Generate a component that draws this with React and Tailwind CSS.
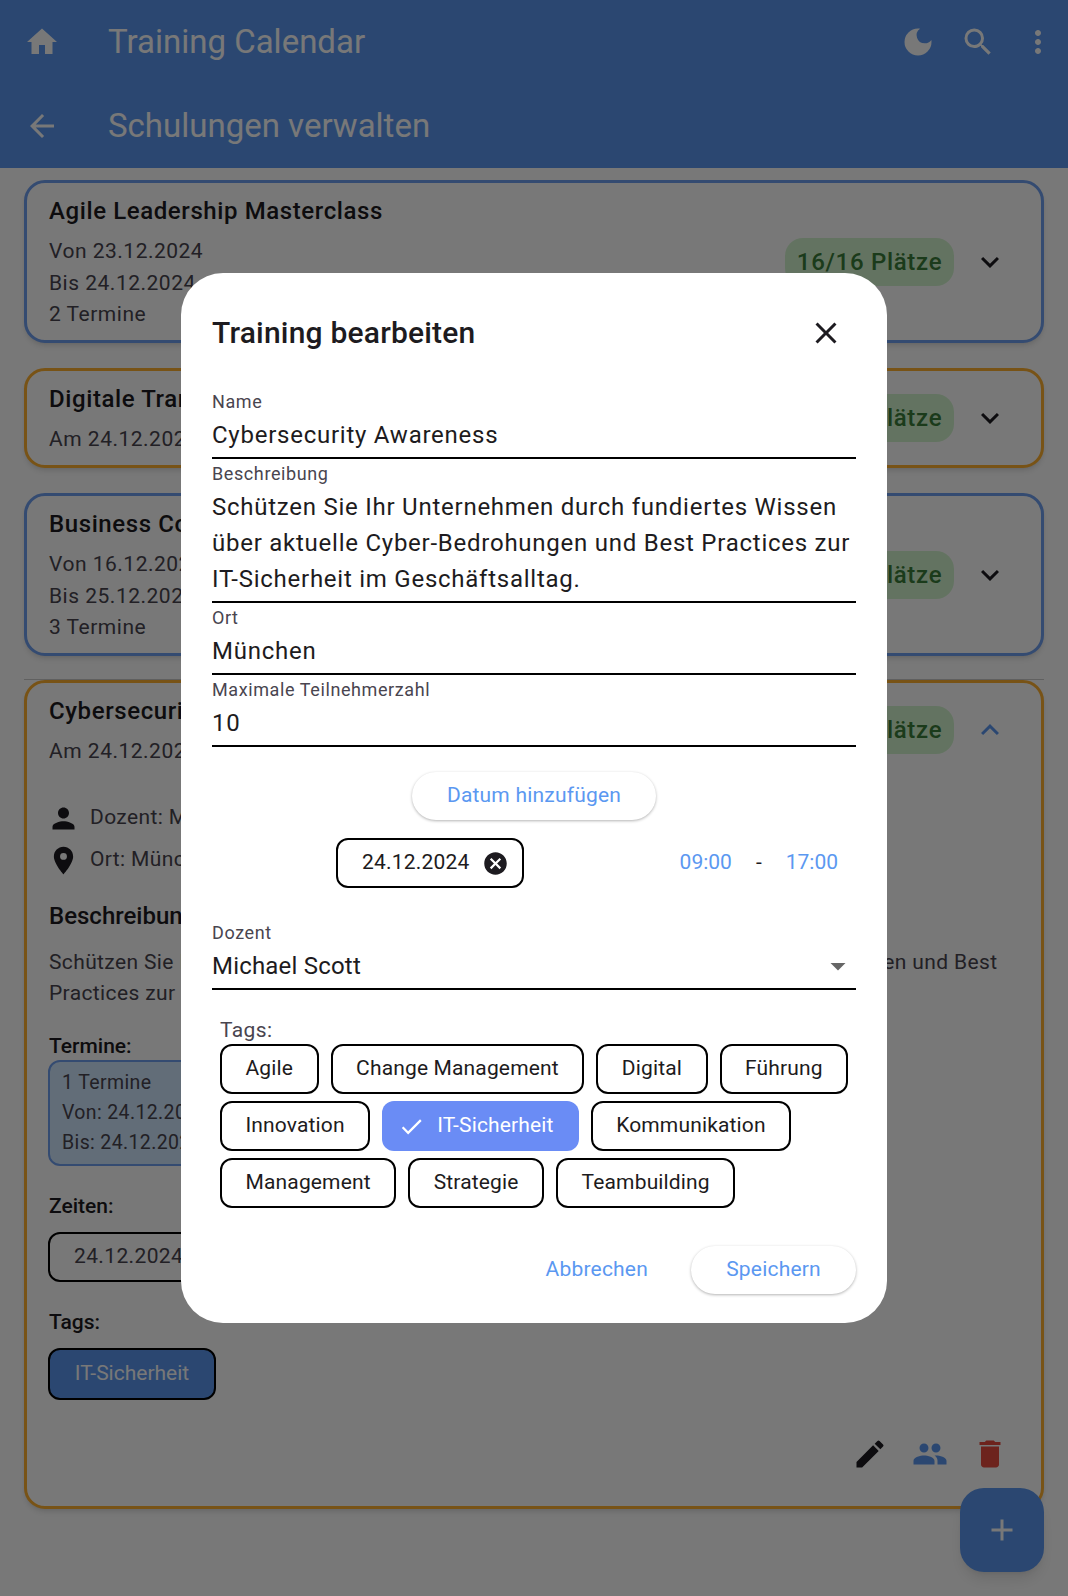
import React from 'react'
import {
  MdHome, MdDarkMode, MdSearch, MdMoreVert, MdArrowBack, MdKeyboardArrowDown, MdKeyboardArrowUp,
  MdPerson, MdLocationOn, MdEdit, MdPeople, MdDelete, MdAdd, MdClose, MdCancel, MdCheck, MdArrowDropDown,
} from 'react-icons/md'

const row1 = ['Agile', 'Change Management', 'Digital', 'Führung']
const row2 = ['Innovation', 'IT-Sicherheit', 'Kommunikation']
const row3 = ['Management', 'Strategie', 'Teambuilding']

function Seats() {
  return (
    <div className="h-12 w-[169px] rounded-[18px] bg-[#d3f5cf] flex items-center justify-center text-[24px] font-medium text-[#3a7d3a] tracking-[0.7px]">
      16/16 Plätze
    </div>
  )
}

function CardHeader({ title, lines, open }) {
  return (
    <div className="flex items-center pl-[22px] pr-[33px]">
      <div className="flex-1 pt-[10px] pb-[9.5px] min-w-0">
        <div className="text-[24px] leading-[36px] font-medium tracking-[0.6px] text-[#1d1b20]">{title}</div>
        <div className="mt-[7px] text-[21px] leading-[31.5px] tracking-[0.5px] text-[#49454f]">
          {lines.map((l) => <div key={l}>{l}</div>)}
        </div>
      </div>
      <Seats />
      <div className="ml-[18px]">
        {open
          ? <MdKeyboardArrowUp size={36} className="text-[#5b98f1]" />
          : <MdKeyboardArrowDown size={36} className="text-[#1d1b20]" />}
      </div>
    </div>
  )
}

function Card({ color, title, lines, gap }) {
  return (
    <div className={`rounded-[21px] border-[3px] bg-white shadow-md ${color} ${gap}`}>
      <CardHeader title={title} lines={lines} />
    </div>
  )
}

function Field({ label, lines }) {
  return (
    <div className="mb-[3px] border-b-2 border-black pb-1">
      <div className="text-[18px] leading-[24px] tracking-[0.6px] text-[#49454f]">{label}</div>
      <div className="mt-[3px] text-[24px] leading-[36px] tracking-[0.75px] text-[#1d1b20]">
        {lines.map((l) => <div key={l}>{l}</div>)}
      </div>
    </div>
  )
}

function Tag({ label, selected }) {
  if (selected) {
    return (
      <div className="h-[50px] rounded-[12px] bg-[#6a8cf5] pl-4 pr-[25px] flex items-center gap-3 text-[21px] tracking-[0.15px] text-white">
        <MdCheck size={27} />
        {label}
      </div>
    )
  }
  return (
    <div className="h-[50px] rounded-[12px] border-2 border-black px-[23.5px] flex items-center text-[21px] tracking-[0.15px] text-[#1d1b20]">
      {label}
    </div>
  )
}

export default function App() {
  return (
    <div className="relative h-[1596px] w-[1068px] overflow-hidden bg-white font-['Roboto',sans-serif]">
      {/* page behind the dialog */}
      <header className="bg-[#5b98f1] text-white text-[33px]">
        <div className="h-[84px] flex items-center pl-6 pr-3">
          <MdHome size={36} />
          <div className="ml-12 flex-1">Training Calendar</div>
          <div className="flex items-center gap-6">
            <MdDarkMode size={36} />
            <MdSearch size={36} />
            <MdMoreVert size={36} />
          </div>
        </div>
        <div className="h-[84px] flex items-center pl-6 pr-3">
          <MdArrowBack size={36} />
          <div className="ml-12 flex-1">Schulungen verwalten</div>
        </div>
      </header>

      <main className="pt-3 px-6">
        <Card color="border-[#6f9ff0]" gap="mb-[25px]" title="Agile Leadership Masterclass" lines={['Von 23.12.2024', 'Bis 24.12.2024', '2 Termine']} />
        <Card color="border-[#ffb030]" gap="mb-[25px]" title="Digitale Transformation" lines={['Am 24.12.2024']} />
        <Card color="border-[#6f9ff0]" gap="mb-[23px]" title="Business Communication" lines={['Von 16.12.2024', 'Bis 25.12.2024', '3 Termine']} />

        <div className="border-t border-[#cccccc]">
          <div className="rounded-[21px] border-[3px] border-[#ffb030] bg-white shadow-md h-[829px]">
            <CardHeader open title="Cybersecurity Awareness" lines={['Am 24.12.2024']} />
            <div className="pl-[22px] pr-[33px] text-[21px] tracking-[0.37px] text-[#49454f]">
              <div className="mt-[25px] h-[32px] flex items-center">
                <MdPerson size={33} className="ml-[-2px] text-[#1d1b20]" />
                <span className="ml-[10px]">Dozent: Michael Scott</span>
              </div>
              <div className="mt-[10px] h-[32px] flex items-center">
                <MdLocationOn size={33} className="ml-[-2px] text-[#1d1b20]" />
                <span className="ml-[10px]">Ort: München</span>
              </div>
              <div className="mt-[22px] text-[24px] leading-[36px] font-medium tracking-normal text-[#1d1b20]">Beschreibung</div>
              <div className="mt-[13px] leading-[31px]">
                Schützen Sie Ihr Unternehmen durch fundiertes Wissen über aktuelle Cyber-Bedrohungen und Best
                <br />
                Practices zur IT-Sicherheit im Geschäftsalltag.
              </div>
              <div className="mt-[22px] text-[21px] leading-[30px] font-medium tracking-normal text-[#1d1b20]">Termine:</div>
              <div className="mt-[-1px] -ml-px w-[260px] h-[106px] rounded-[12px] border-2 border-[#6f9ff0] bg-[#d0e8ff] pl-3 pt-[6px] text-[19.5px] leading-[30px]">
                <div>1 Termine</div>
                <div>Von: 24.12.2024</div>
                <div>Bis: 24.12.2024</div>
              </div>
              <div className="mt-[25px] text-[21px] leading-[30px] font-medium tracking-normal text-[#1d1b20]">Zeiten:</div>
              <div className="mt-[11px] -ml-px w-[190px] h-[50px] rounded-[12px] border-2 border-black pl-6 flex items-center">24.12.2024</div>
              <div className="mt-[25px] text-[21px] leading-[30px] font-medium tracking-normal text-[#1d1b20]">Tags:</div>
              <div className="mt-[11px] -ml-px w-[168px] h-[52px] rounded-[12px] border-2 border-black bg-[#5b98f1] flex items-center justify-center text-white tracking-normal">IT-Sicherheit</div>
              <div className="mt-[36px] flex items-center justify-end">
                <MdEdit size={36} className="text-[#1d1b20]" />
                <MdPeople size={36} className="ml-6 text-[#5b98f1]" />
                <MdDelete size={36} className="ml-6 text-[#e74c3f]" />
              </div>
            </div>
          </div>
        </div>
      </main>

      <button className="absolute left-[960px] top-[1488px] w-[84px] h-[84px] rounded-[24px] bg-[#5b98f1] shadow-lg flex items-center justify-center text-white">
        <MdAdd size={36} />
      </button>

      {/* scrim and dialog */}
      <div className="absolute inset-0 bg-black/53 flex items-center justify-center">
        <div className="w-[706px] rounded-[42px] bg-white px-[31px] pt-[42px] pb-[29px]">
          <div className="flex items-center justify-between mb-[39px]">
            <div className="text-[30px] leading-[36px] font-medium tracking-[0.2px] text-[#1d1b20]">Training bearbeiten</div>
            <MdClose size={36} className="mr-3 text-[#1d1b20]" />
          </div>

          <Field label="Name" lines={['Cybersecurity Awareness']} />
          <Field
            label="Beschreibung"
            lines={[
              'Schützen Sie Ihr Unternehmen durch fundiertes Wissen',
              'über aktuelle Cyber-Bedrohungen und Best Practices zur',
              'IT-Sicherheit im Geschäftsalltag.',
            ]}
          />
          <Field label="Ort" lines={['München']} />
          <Field label="Maximale Teilnehmerzahl" lines={['10']} />

          <div className="mt-[25px] flex justify-center">
            <div className="h-12 w-[244px] rounded-full bg-white shadow-[0_1px_3px_rgba(0,0,0,0.3)] flex items-center justify-center text-[21px] tracking-[0.2px] text-[#5b98f1]">
              Datum hinzufügen
            </div>
          </div>

          <div className="mt-[18px] flex items-center">
            <div className="flex-1 flex justify-center">
              <div className="w-[188px] h-[50px] rounded-[12px] border-2 border-black pl-6 flex items-center text-[21px] tracking-[0.2px] text-[#1d1b20]">
                24.12.2024
                <MdCancel size={27} className="ml-3 text-[#1d1b20]" />
              </div>
            </div>
            <div className="w-[208px] pr-[18px] flex items-center justify-end gap-6 text-[21px]">
              <span className="text-[#5b98f1]">09:00</span>
              <span className="text-[#1d1b20]">-</span>
              <span className="text-[#5b98f1]">17:00</span>
            </div>
          </div>

          <div className="mt-[33px] border-b-2 border-black pb-1">
            <div className="text-[18px] leading-[24px] tracking-[0.6px] text-[#49454f]">Dozent</div>
            <div className="mt-[3px] flex items-center justify-between text-[24px] leading-[36px] tracking-[0.2px] text-[#1d1b20]">
              Michael Scott
              <MdArrowDropDown size={36} className="text-[#666]" />
            </div>
          </div>

          <div className="mt-[28px] pl-2">
            <div className="text-[21px] leading-[24px] tracking-[0.4px] text-[#49454f]">Tags:</div>
            <div className="mt-[2px] flex flex-col gap-[7px]">
              <div className="flex gap-3">{row1.map((t) => <Tag key={t} label={t} />)}</div>
              <div className="flex gap-3">{row2.map((t) => <Tag key={t} label={t} selected={t === 'IT-Sicherheit'} />)}</div>
              <div className="flex gap-3">{row3.map((t) => <Tag key={t} label={t} />)}</div>
            </div>
          </div>

          <div className="mt-[38px] flex items-center justify-end text-[21px] tracking-[0.2px] text-[#5b98f1]">
            <div className="h-12 px-9 flex items-center">Abbrechen</div>
            <div className="ml-[7px] h-12 w-[165px] rounded-full bg-white shadow-[0_1px_3px_rgba(0,0,0,0.3)] flex items-center justify-center">Speichern</div>
          </div>
        </div>
      </div>
    </div>
  )
}
